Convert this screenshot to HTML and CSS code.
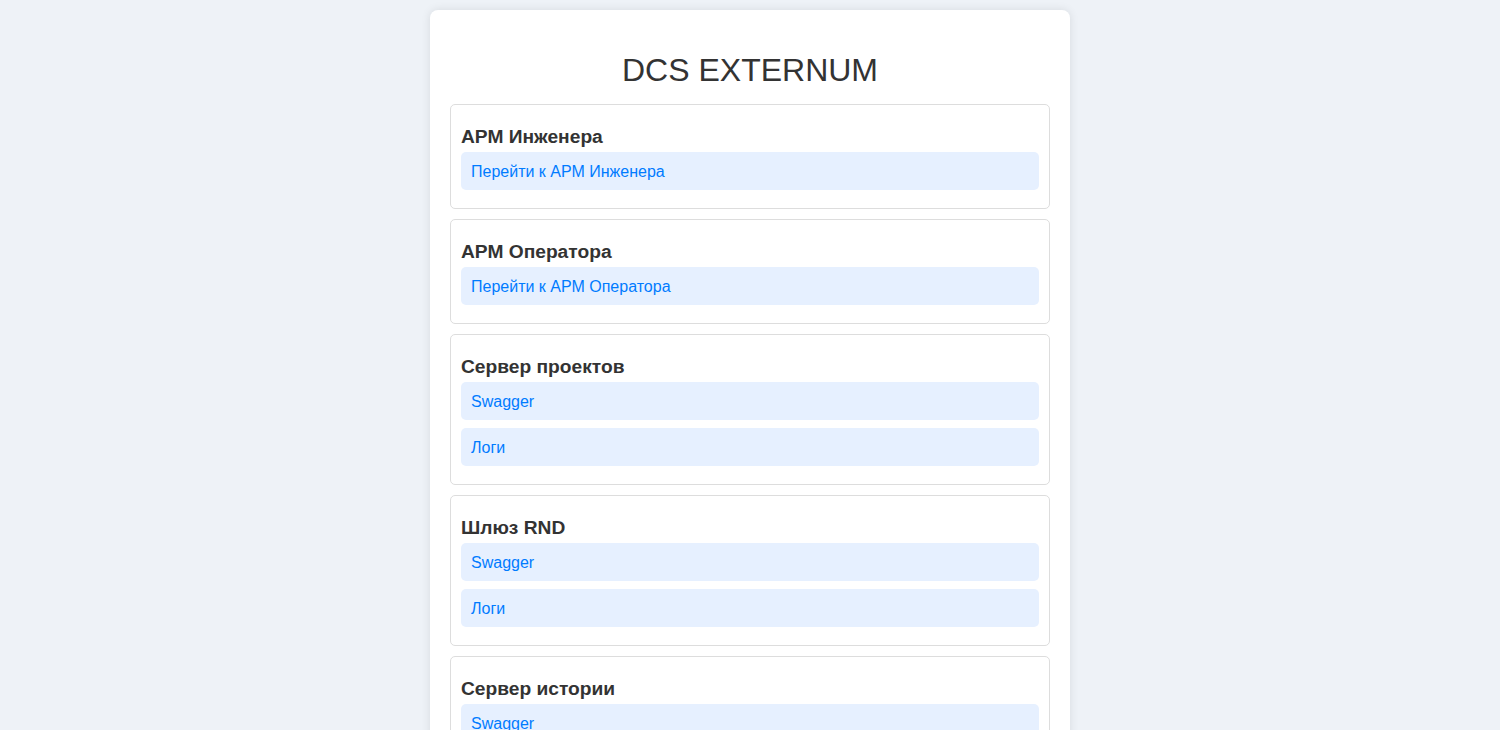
FILE: index.html
```html
<!DOCTYPE html>
<html lang="ru">
<head>
<meta charset="utf-8">
<title>DCS EXTERNUM</title>
<link rel="stylesheet" href="styles.css">
</head>
<body>
<div class="container">
  <h1 class="title">DCS EXTERNUM</h1>
  <div class="section">
    <h3 class="section-title">АРМ Инженера</h3>
    <a class="link" href="#">Перейти к АРМ Инженера</a>
  </div>
  <div class="section">
    <h3 class="section-title">АРМ Оператора</h3>
    <a class="link" href="#">Перейти к АРМ Оператора</a>
  </div>
  <div class="section">
    <h3 class="section-title">Сервер проектов</h3>
    <a class="link" href="#">Swagger</a>
    <a class="link" href="#">Логи</a>
  </div>
  <div class="section">
    <h3 class="section-title">Шлюз RND</h3>
    <a class="link" href="#">Swagger</a>
    <a class="link" href="#">Логи</a>
  </div>
  <div class="section">
    <h3 class="section-title">Сервер истории</h3>
    <a class="link" href="#">Swagger</a>
    <a class="link" href="#">Логи</a>
  </div>
</div>
</body>
</html>
```

FILE: styles.css
```css
html, body {
  margin: 0;
  padding: 0;
}
body {
  background: #eef2f7;
  font-family: "Liberation Sans", Arial, sans-serif;
  color: #333;
  padding-top: 10px;
}
.container {
  width: 600px;
  margin: 0 auto;
  background: #fff;
  padding: 20px;
  border-radius: 8px;
  box-shadow: 0 0 10px rgba(0, 0, 0, 0.1);
}
.title {
  font-size: 32px;
  font-weight: normal;
  text-align: center;
  margin: 22px 0 15px;
  line-height: 36.8px;
}
.section {
  border: 1px solid #ddd;
  border-radius: 5px;
  padding: 10px;
  margin-bottom: 10px;
}
.section-title {
  font-size: 19.2px;
  font-weight: bold;
  margin: 11px 0 4px;
  line-height: 22px;
}
.link {
  display: block;
  padding: 11px 10px 9px;
  background: #e6f0ff;
  color: #007bff;
  text-decoration: none;
  border-radius: 5px;
  font-size: 16px;
  line-height: 18px;
  margin-bottom: 8px;
}
```
